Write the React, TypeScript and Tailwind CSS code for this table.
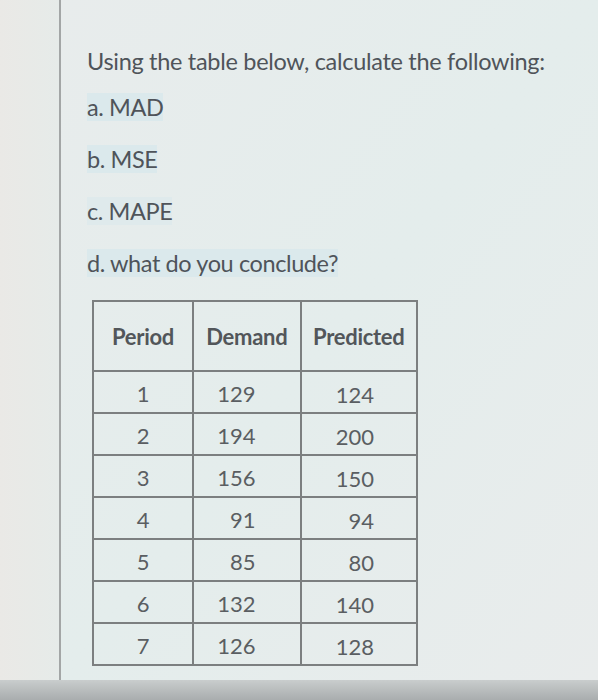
import React from "react";

const rows: [string, string, string][] = [
  ["1", "129", "124"],
  ["2", "194", "200"],
  ["3", "156", "150"],
  ["4", "91", "94"],
  ["5", "85", "80"],
  ["6", "132", "140"],
  ["7", "126", "128"],
];

export default function App() {
  return (
    <div
      className="w-[598px] h-[700px] flex flex-col overflow-hidden bg-[#e7eded]"
      style={{ fontFamily: "Lato, 'Open Sans', sans-serif" }}
    >
      <div className="flex flex-1 min-h-0">
        <div className="w-[59px] shrink-0 bg-gradient-to-r from-[#eae9e6] to-[#e6ebe9]" />
        <div className="w-[2px] shrink-0 bg-[#a3a6a6]" />
        <div className="flex-1 pl-[26px] pt-[46px] flex flex-col bg-gradient-to-br from-[#e8ecec] via-[#e4edec] to-[#e9ecec]">
          <div className="h-[30px] leading-[30px] text-[23.5px] text-[#4f545a] tracking-[-0.3px]">
            Using the table below, calculate the following:
          </div>
          <div className="mt-[16px] flex flex-col gap-[22px] text-[23.5px] text-[#4f545a] leading-[30px]">
            <div className="h-[30px]">
              <span className="bg-[#dbe9ec] tracking-[-0.4px]">a. MAD</span>
            </div>
            <div className="h-[30px]">
              <span className="bg-[#dbe9ec] tracking-[-0.4px]">b. MSE</span>
            </div>
            <div className="h-[30px]">
              <span className="bg-[#dfeaec] tracking-[-0.4px]">c. MAPE</span>
            </div>
            <div className="h-[30px]">
              <span className="bg-[#dbe9ec] tracking-[-0.4px]">d. what do you conclude?</span>
            </div>
          </div>
          <table className="mt-[22px] ml-[5px] border-collapse border-2 border-[#7c7f80] w-[326px] text-[22px] text-[#5a5e62]">
            <thead>
              <tr className="h-[70px]">
                <th className="w-[101px] border-2 border-[#7c7f80] font-bold text-[#52565a] text-center tracking-[-0.3px]">
                  Period
                </th>
                <th className="w-[108px] border-2 border-[#7c7f80] font-bold text-[#52565a] text-center tracking-[-0.3px]">
                  Demand
                </th>
                <th className="w-[117px] border-2 border-[#7c7f80] font-bold text-[#52565a] text-center tracking-[-0.3px]">
                  Predicted
                </th>
              </tr>
            </thead>
            <tbody>
              {rows.map((r) => (
                <tr key={r[0]} className="h-[42px]">
                  <td className="border-2 border-[#7c7f80] text-center pt-[2px]">{r[0]}</td>
                  <td className="border-2 border-[#7c7f80] text-right pr-[44px] pt-[2px]">{r[1]}</td>
                  <td className="border-2 border-[#7c7f80] text-right pr-[42px] pt-[4px]">{r[2]}</td>
                </tr>
              ))}
            </tbody>
          </table>
        </div>
      </div>
      <div className="h-[20px] shrink-0 bg-gradient-to-b from-[#c9cdcd] to-[#a9adae]" />
    </div>
  );
}
